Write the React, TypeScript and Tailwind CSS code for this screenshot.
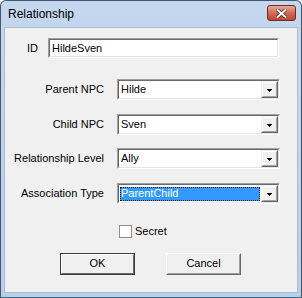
const font = "font-['Liberation_Sans',Arial,sans-serif]";

function DropButton() {
  return (
    <div className="h-full w-[17px] shrink-0 border border-t-[#f0f0f0] border-l-[#f0f0f0] border-r-[#696969] border-b-[#696969]">
      <div className="flex h-full items-center justify-center border border-t-white border-l-white border-r-[#a0a0a0] border-b-[#a0a0a0] bg-[#f0f0f0]">
        <svg width="5" height="3" viewBox="0 0 5 3" className="mt-[1px]">
          <rect x="0" y="0" width="5" height="1" fill="#000" />
          <rect x="1" y="1" width="3" height="1" fill="#000" />
          <rect x="2" y="2" width="1" height="1" fill="#000" />
        </svg>
      </div>
    </div>
  );
}

function Sunken({ className, children }: { className: string; children: React.ReactNode }) {
  return (
    <div className={`border border-t-[#a0a0a0] border-l-[#a0a0a0] border-r-white border-b-white ${className}`}>
      <div className="flex h-full items-center border border-t-[#696969] border-l-[#696969] border-r-[#e3e3e3] border-b-[#e3e3e3] bg-white">
        {children}
      </div>
    </div>
  );
}

function Combo({ value, selected }: { value: string; selected?: boolean }) {
  return (
    <Sunken className="h-[21px] w-[163px]">
      {selected ? (
        <div className="mx-[1px] flex h-[14px] flex-1 items-center bg-[#3399ff] pl-[1px] text-white outline-1 outline-dotted outline-[#1a1a1a] -outline-offset-1">
          {value}
        </div>
      ) : (
        <div className="flex-1 pl-[2px]">{value}</div>
      )}
      <DropButton />
    </Sunken>
  );
}

function Row({ label, className, children }: { label: string; className: string; children: React.ReactNode }) {
  return (
    <div className={`flex items-center ${className}`}>
      <div className="w-[100px] pr-[1px] text-right">{label}</div>
      <div className="ml-[12px]">{children}</div>
    </div>
  );
}

function Button({ label, primary }: { label: string; primary?: boolean }) {
  return (
    <div className={`h-[22px] w-[75px] border ${primary ? "border-[#3c3c3c]" : "border-t-white border-l-white border-r-[#696969] border-b-[#696969]"}`}>
      <div
        className={`flex h-full items-center justify-center bg-[#f0f0f0] ${
          primary
            ? "border border-t-white border-l-white border-r-[#696969] border-b-[#696969]"
            : "border border-t-[#f0f0f0] border-l-[#f0f0f0] border-r-[#a0a0a0] border-b-[#a0a0a0]"
        }`}
      >
        {label}
      </div>
    </div>
  );
}

export default function App() {
  return (
    <div className={`${font} flex h-[298px] w-[302px] flex-col rounded-t-[6px] border border-[#44566b] border-b-[#2f6f80] bg-gradient-to-b from-[#c4d7ee] to-[#b9cfe8] text-[11px] text-black`}>
      {/* title bar */}
      <div className="flex h-[26px] shrink-0 items-start justify-between">
        <div className="mt-[5px] pl-[7px] text-[12px] leading-[16px]">Relationship</div>
        <div className="mr-[5px] mt-[4px] flex h-[16px] w-[29px] items-center justify-center rounded-[3px] border border-[#6b2a22] bg-gradient-to-b from-[#e6a898] via-[#cf6a55] to-[#c0452f]">
          <svg width="11" height="9" viewBox="0 0 11 9">
            <path d="M1.5 1 L9.5 8 M9.5 1 L1.5 8" stroke="#3a2320" strokeWidth="3.4" strokeLinecap="square" />
            <path d="M1.5 1 L9.5 8 M9.5 1 L1.5 8" stroke="#fff" strokeWidth="2" strokeLinecap="square" />
          </svg>
        </div>
      </div>

      {/* client area */}
      <div className="mx-[3px] mb-[4px] flex flex-1 flex-col border border-[#a9bdd6] bg-[#f0f0f0]">
        <div className="mt-[10px] flex items-center pl-[22px]">
          <div className="w-[21px]">ID</div>
          <Sunken className="h-[20px] w-[231px]">
            <div className="pl-[2px]">HildeSven</div>
          </Sunken>
        </div>

        <Row label="Parent NPC" className="mt-[21px]">
          <Combo value="Hilde" />
        </Row>
        <Row label="Child NPC" className="mt-[14px]">
          <Combo value="Sven" />
        </Row>
        <Row label="Relationship Level" className="mt-[13px]">
          <Combo value="Ally" />
        </Row>
        <Row label="Association Type" className="mt-[14px]">
          <Combo value="ParentChild" selected />
        </Row>

        <div className="ml-[114px] mt-[19px] flex items-center gap-[3px]">
          <div className="h-[13px] w-[13px] border border-[#8e8f8f] bg-white" />
          <div>Secret</div>
        </div>

        <div className="ml-[55px] mt-[13px] flex gap-[31px]">
          <Button label="OK" primary />
          <Button label="Cancel" />
        </div>
      </div>
    </div>
  );
}
